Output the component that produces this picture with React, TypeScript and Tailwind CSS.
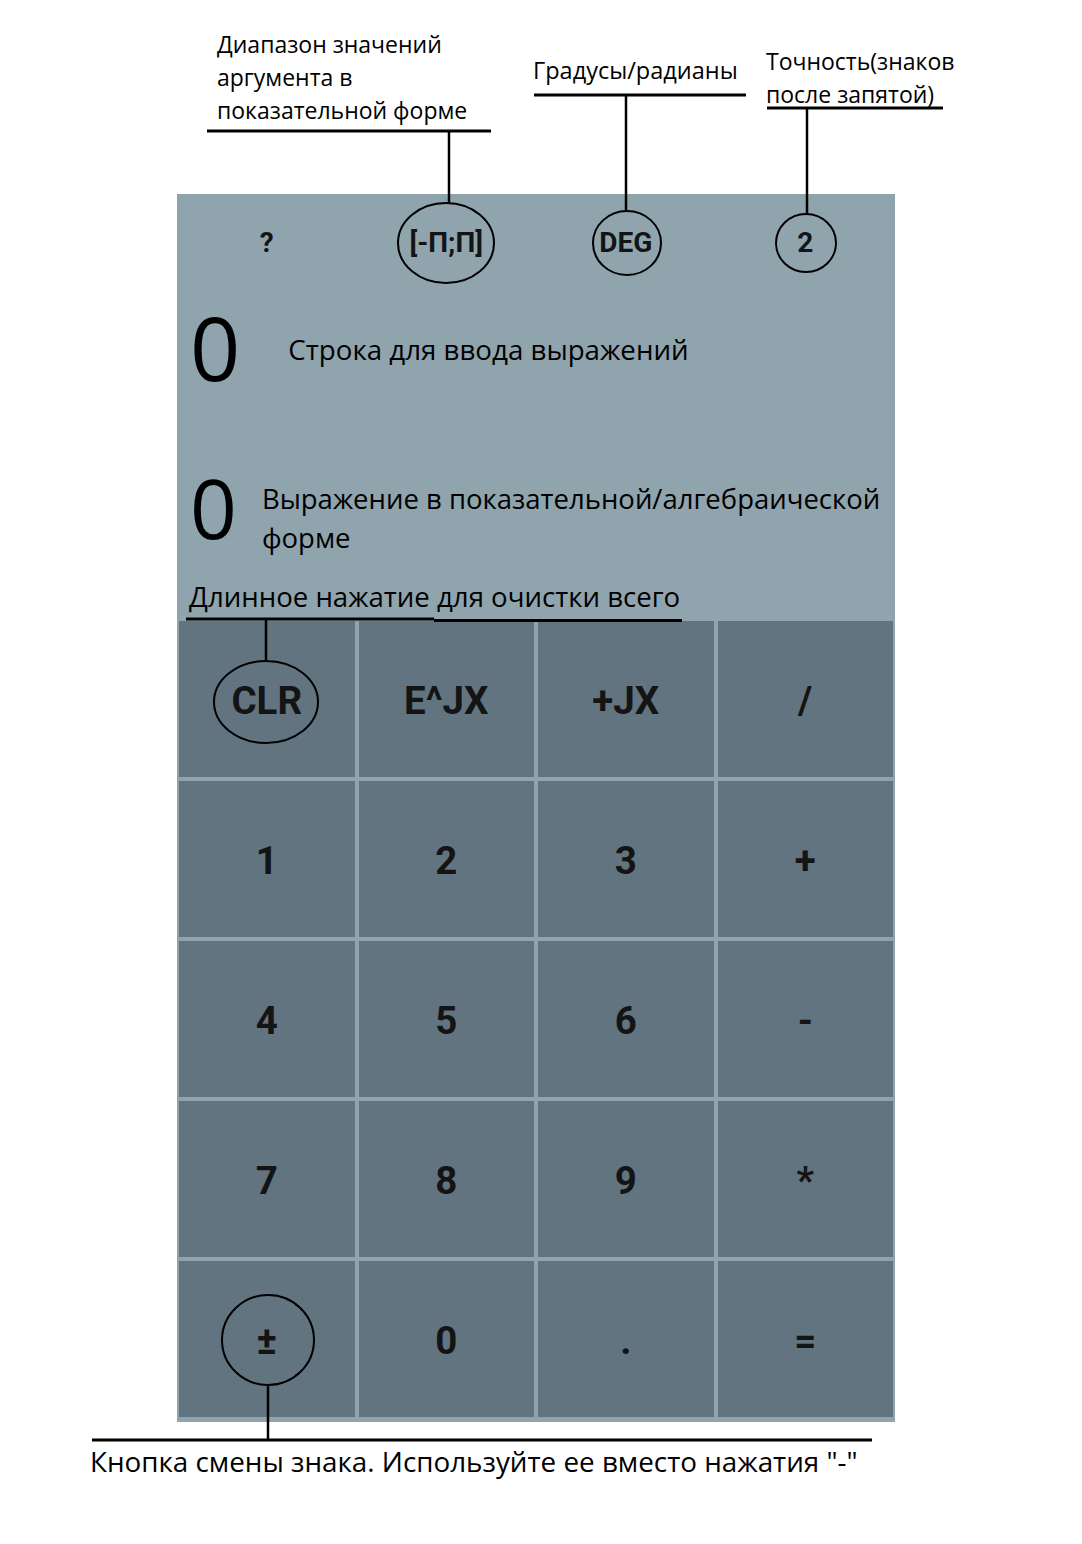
import React from 'react';

// Key labels, row by row
const keys = [
  'CLR', 'E^JX', '+JX', '/',
  '1', '2', '3', '+',
  '4', '5', '6', '-',
  '7', '8', '9', '*',
  '±', '0', '.', '=',
];

const topBar = ['?', '[-П;П]', 'DEG', '2'];

const note = "font-['Open_Sans',sans-serif] text-black";
const appFont = "font-['Roboto',sans-serif] font-bold text-[#141414]";

function Callouts() {
  // lines and ellipses drawn over the screenshot
  return (
    <svg
      className="absolute inset-0 pointer-events-none"
      width="1082"
      height="1544"
      viewBox="0 0 1082 1544"
      fill="none"
      stroke="black"
    >
      <g strokeWidth="3">
        <line x1="207" y1="131" x2="491" y2="131" />
        <line x1="534" y1="95" x2="746" y2="95" />
        <line x1="767" y1="108" x2="943" y2="108" />
        <line x1="186" y1="619" x2="434" y2="619" />
        <line x1="434" y1="620.5" x2="682" y2="620.5" />
        <line x1="92" y1="1440" x2="872" y2="1440" />
      </g>
      <g strokeWidth="2.5">
        <line x1="449" y1="131" x2="449" y2="203" />
        <line x1="626" y1="95" x2="626" y2="211" />
        <line x1="807" y1="108" x2="807" y2="214" />
        <line x1="266" y1="620" x2="266" y2="661" />
        <line x1="268" y1="1385" x2="268" y2="1440" />
      </g>
      <g strokeWidth="2">
        <ellipse cx="446" cy="243" rx="48" ry="40" />
        <ellipse cx="627" cy="243" rx="34" ry="32" />
        <ellipse cx="806" cy="243" rx="30" ry="29" />
        <ellipse cx="266" cy="702" rx="52" ry="41" />
        <ellipse cx="268" cy="1340" rx="46" ry="45" />
      </g>
    </svg>
  );
}

export default function App() {
  return (
    <div className="relative w-[1082px] h-[1544px] bg-white overflow-hidden">
      {/* callout labels above the panel */}
      <div className={`absolute left-[217px] top-[28px] text-[23px] leading-[33px] ${note}`}>
        Диапазон значений
        <br />
        аргумента в
        <br />
        показательной форме
      </div>
      <div className={`absolute left-[533px] top-[54px] text-[23.5px] leading-[33px] ${note}`}>
        Градусы/радианы
      </div>
      <div className={`absolute left-[766px] top-[45px] text-[23px] leading-[33px] ${note}`}>
        Точность(знаков
        <br />
        после запятой)
      </div>

      <div className="pt-[194px] pl-[177px]">
        <div className="w-[718px] bg-[#90a4ae]">
          {/* top bar */}
          <div className="grid grid-cols-4 gap-x-[4px] px-[2px] h-[96px] items-center">
            {topBar.map((t) => (
              <div key={t} className={`text-center text-[28px] pt-[2px] ${appFont}`}>
                {t}
              </div>
            ))}
          </div>

          {/* input line */}
          <div className="flex items-center h-[114px] pl-[13px]">
            <span className={`text-[88px] leading-none ${note}`}>0</span>
            <span className={`ml-[48px] mt-[6px] text-[27.7px] ${note}`}>Строка для ввода выражений</span>
          </div>

          {/* result line */}
          <div className="flex items-start pt-[62px] pl-[13px]">
            <span className={`text-[82px] leading-none ${note}`}>0</span>
            <span className={`mt-[13px] ml-[25px] pr-[8px] text-[27.5px] leading-[39px] ${note}`}>
              Выражение в показательной/алгебраической форме
            </span>
          </div>

          <div className={`h-[62px] pt-[20px] pl-[12px] text-[27.6px] leading-[39px] ${note}`}>
            Длинное нажатие для очистки всего
          </div>

          {/* keypad */}
          <div className="grid grid-cols-4 gap-[4px] px-[2px] pt-[2px] pb-[5px]">
            {keys.map((k) => (
              <div
                key={k}
                className={`h-[156px] pt-[3px] bg-[#61747f] flex items-center justify-center text-[38.5px] ${appFont}`}
              >
                {k}
              </div>
            ))}
          </div>
        </div>
      </div>

      <div className={`absolute left-[90px] top-[1442px] text-[27.8px] leading-[39px] ${note}`}>
        Кнопка смены знака. Используйте ее вместо нажатия "-"
      </div>

      <Callouts />
    </div>
  );
}
